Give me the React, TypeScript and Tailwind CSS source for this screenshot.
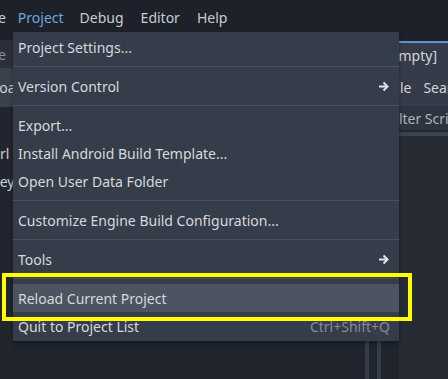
import React from "react";

const Arrow = () => (
  <svg width="12" height="11" viewBox="0 0 12 11" className="shrink-0">
    <path d="M1 5.5h8" stroke="#e2e4e8" strokeWidth="2" fill="none" />
    <path d="M5.5 1.5L9.5 5.5L5.5 9.5" stroke="#e2e4e8" strokeWidth="2" fill="none" strokeLinejoin="miter" />
  </svg>
);

const Item = ({ label, arrow, shortcut, active }: { label: string; arrow?: boolean; shortcut?: string; active?: boolean }) => (
  <div className={`h-[28px] flex items-center justify-between pl-[5px] pr-[9px] ${active ? "bg-[#4d5360]" : ""}`}>
    <span className="text-[#d6d8dc] whitespace-nowrap">{label}</span>
    {arrow && <Arrow />}
    {shortcut && <span className="text-[#868b94] whitespace-nowrap">{shortcut}</span>}
  </div>
);

const Sep = () => (
  <div className="h-[11px] flex items-center">
    <div className="h-[1px] w-full bg-[#4a505c]" />
  </div>
);

export default function App() {
  return (
    <div
      className="relative w-[448px] h-[379px] overflow-hidden bg-[#20242c] text-[14px] flex flex-col"
      style={{ fontFamily: '"Noto Sans", "DejaVu Sans", sans-serif' }}
    >
      {/* top menu bar */}
      <div className="h-[40px] shrink-0 bg-[#1d2129] flex items-start">
        <div className="h-[34px] flex items-center whitespace-nowrap text-[#c9ccd1]">
          <span className="ml-[-33px]">Scene</span>
          <span className="ml-[12px] text-[#6fa7df]">Project</span>
          <span className="ml-[16px]">Debug</span>
          <span className="ml-[17px]">Editor</span>
          <span className="ml-[17px]">Help</span>
        </div>
      </div>

      {/* body */}
      <div className="flex-1 flex min-h-0">
        {/* left dock */}
        <div className="w-[13px] shrink-0 flex flex-col overflow-hidden whitespace-nowrap">
          <div className="h-[28px] bg-[#2a2f39] flex items-center text-[#8d9299]">
            <span className="ml-[-33px]">Scene</span>
          </div>
          <div className="h-[39px] bg-[#3a404c] flex items-center text-[#ced1d5]">
            <span className="ml-[-8px]">Load</span>
          </div>
          <div className="flex-1 bg-[#21252d] text-[#ced1d5] flex flex-col">
            <div className="h-[32px]" />
            <div className="h-[28px] flex items-center">
              <span className="ml-[-14px]">Ctrl</span>
            </div>
            <div className="h-[28px] flex items-center">
              <span className="ml-[-9px]">Key</span>
            </div>
          </div>
        </div>

        {/* middle */}
        <div className="flex-1 flex justify-end items-end pr-[18px] gap-[8px]">
          <div className="w-[4px] h-[40px] bg-[#363c48]" />
          <div className="w-[4px] h-[40px] bg-[#363c48]" />
        </div>

        {/* right dock */}
        <div className="w-[49px] shrink-0 flex flex-col whitespace-nowrap overflow-hidden">
          <div className="h-[1px] bg-[#1d2129]" />
          <div className="h-[2px] bg-[#5c93d0]" />
          <div className="h-[25px] bg-[#353b48] flex items-center text-[#d2d4d8]">
            <span className="ml-[-13px]">[empty]</span>
          </div>
          <div className="h-[38px] bg-[#353b48] flex items-center text-[#d2d4d8]">
            <span className="ml-[-10px]">File</span>
            <span className="ml-[12px]">Search</span>
          </div>
          <div className="h-[24px] bg-[#2e343f] flex items-center text-[#aeb2b8]">
            <span className="ml-[-11px]">Filter Scripts</span>
          </div>
          <div className="h-[2px] bg-[#22262e]" />
          <div className="h-[4px] bg-[#3b4250]" />
          <div className="flex-1 bg-[#262b34]" />
        </div>
      </div>

      {/* popup menu */}
      <div className="absolute left-[13px] top-[32px] w-[386px] bg-[#363d4a] py-[1px] shadow-[0_2px_4px_rgba(0,0,0,0.35)]">
        <Item label="Project Settings..." />
        <Sep />
        <Item label="Version Control" arrow />
        <Sep />
        <Item label="Export..." />
        <Item label="Install Android Build Template..." />
        <Item label="Open User Data Folder" />
        <Sep />
        <Item label="Customize Engine Build Configuration..." />
        <Sep />
        <Item label="Tools" arrow />
        <Sep />
        <Item label="Reload Current Project" active />
        <Item label="Quit to Project List" shortcut="Ctrl+Shift+Q" />
      </div>

      {/* highlight annotation */}
      <div className="absolute left-[2px] top-[273px] w-[410px] h-[48px] border-[4px] border-[#ffff00]" />
    </div>
  );
}
